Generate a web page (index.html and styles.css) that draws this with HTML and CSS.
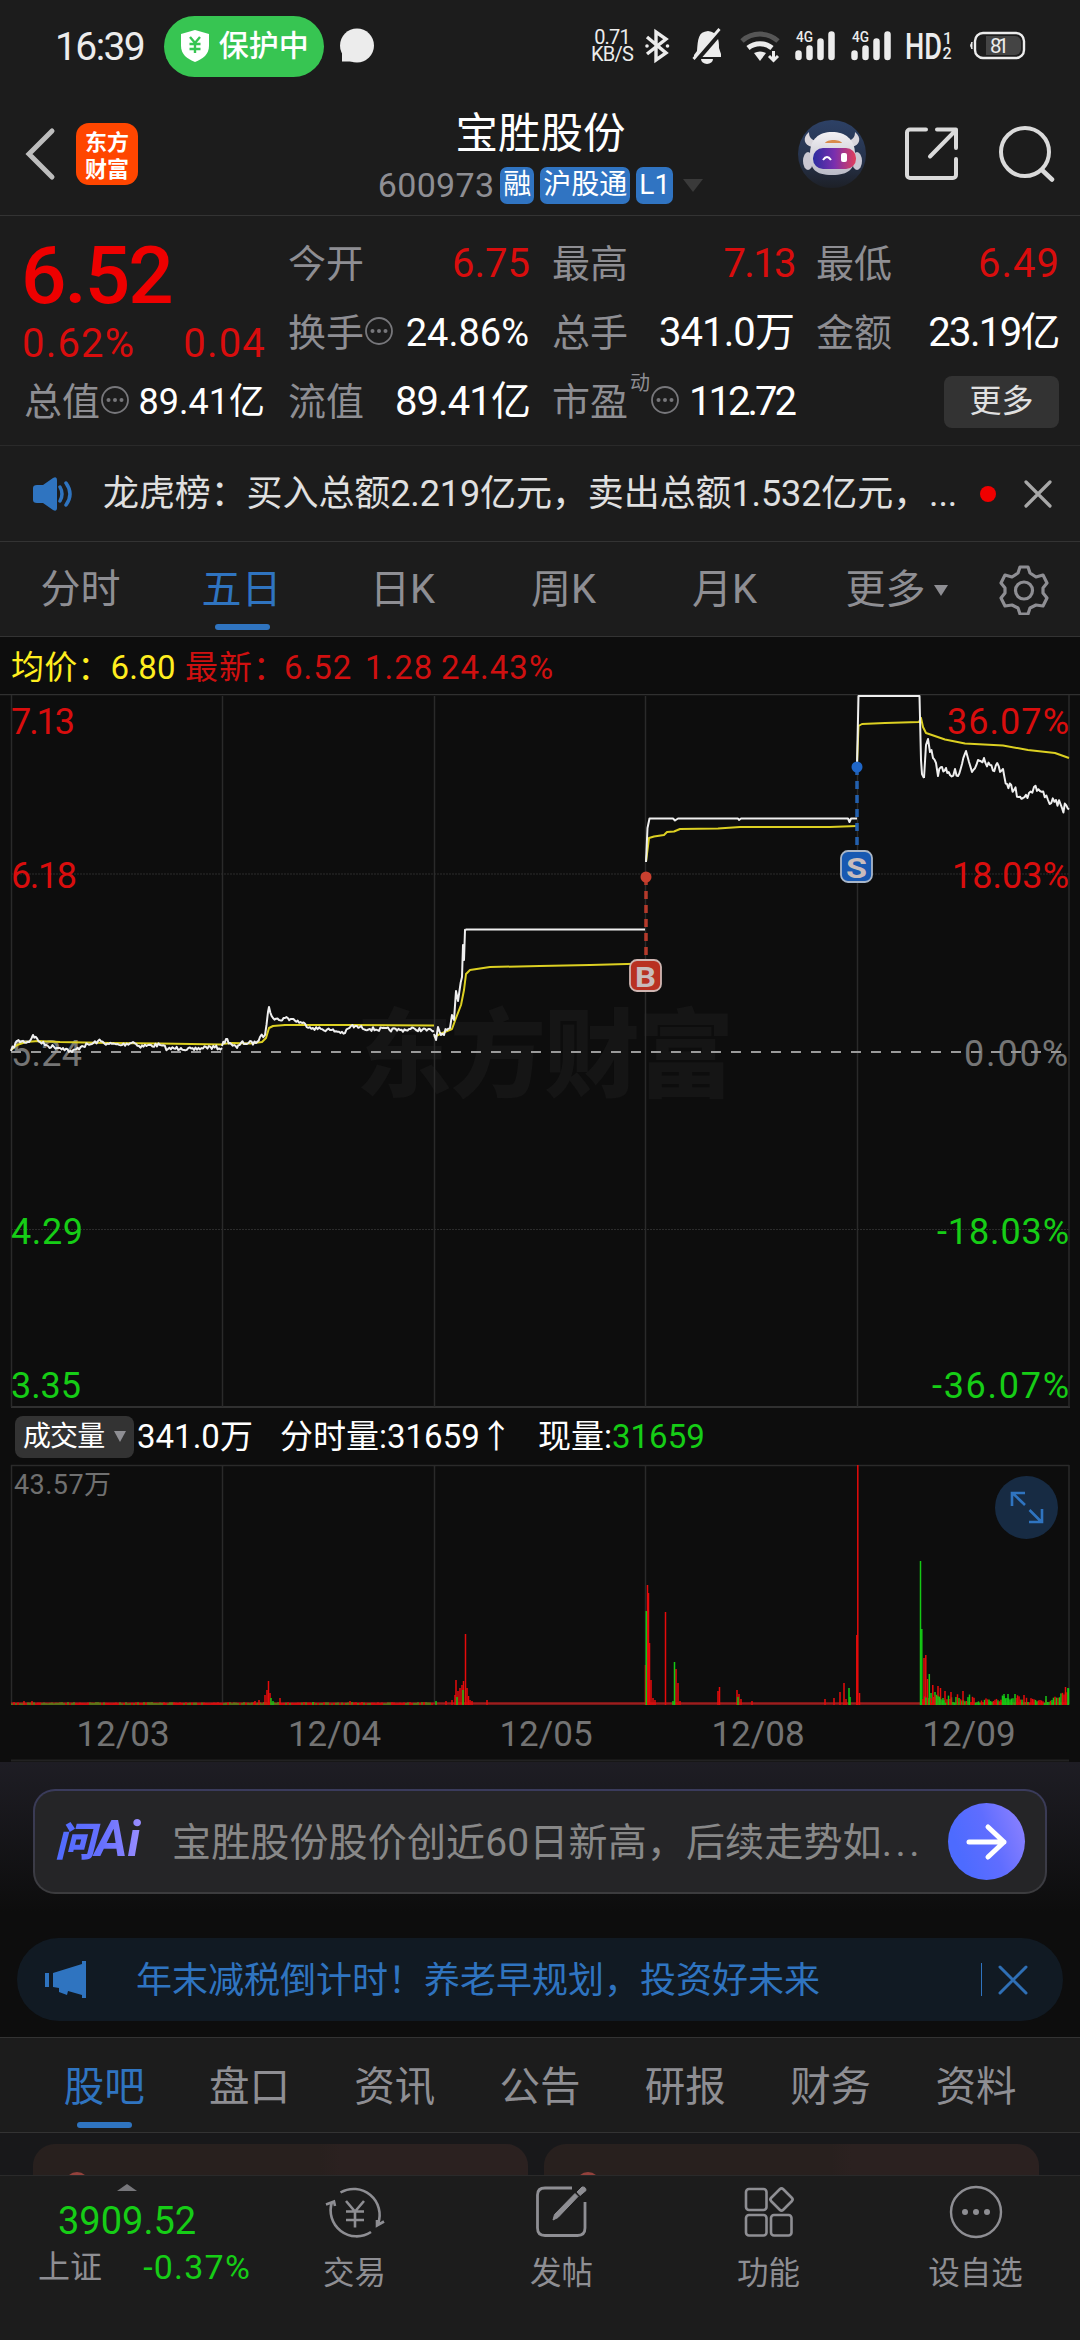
FILE: index.html
```html
<!DOCTYPE html>
<html lang="zh-CN">
<head>
<meta charset="utf-8">
<title>宝胜股份 600973</title>
<link rel="stylesheet" href="styles.css">
</head>
<body>
<div class="app">

  <div class="status">
    <span class="time">16:39</span>
    <span class="guard">
      <svg width="28" height="32" viewBox="0 0 28 32"><path d="M14 0 28 4V16C28 24 22 29 14 32 6 29 0 24 0 16V4Z" fill="#fff"/><path d="M9 7l5 6 5-6M8.500 14h11M8.500 19h11M14 13v10" fill="none" stroke="#37c552" stroke-width="2.400"/></svg>
      <span>保护中</span>
    </span>
    <svg class="bubble" width="34" height="36" viewBox="0 0 34 36"><circle cx="17" cy="17.500" r="17" fill="#ececec"/><path d="M2 22V33.500H13Z" fill="#ececec"/></svg>
    <span class="speed"><span>0.71</span><span>KB/S</span></span>
    <svg class="sys" width="440" height="40" viewBox="640 26 440 40">
      <g fill="none" stroke="#ececec" stroke-width="3.400"><path d="M647 37l19 16-10 7V32l10 7-19 15"/></g>
      <circle cx="647" cy="46" r="1.800" fill="#ececec"/><circle cx="667.500" cy="46" r="1.800" fill="#ececec"/>
      <path d="M697 51c1-12 1-19 11-20 10 1 11 9 11 17l2 6v3H694v-2z" fill="#ececec"/><path d="M701 59h12a6 5 0 0 1-12 0z" fill="#ececec"/><path d="M695 61 721 31" stroke="#1c1c1c" stroke-width="6"/><path d="M693.500 59 719.500 29" stroke="#ececec" stroke-width="2.800"/>
      <path d="M742 41a27 27 0 0 1 36 0" fill="none" stroke="#565656" stroke-width="5"/>
      <path d="M748 48a19 19 0 0 1 24 0" fill="none" stroke="#ececec" stroke-width="5"/>
      <path d="M754 53q6-3 12 0l-6 8z" fill="#ececec"/><path d="M773.500 51v8M769 56l4.500 4.500L778 56" fill="none" stroke="#ececec" stroke-width="3"/>
      <g stroke="#ececec" stroke-width="6.500" stroke-linecap="round"><path d="M798.500 53.500v3.500M809.500 48.500v8.500M820.500 41.500v15.500M831.500 34.500v22.500M854.500 53.500v3.500M865.500 48.500v8.500M876.500 41.500v15.500M887.500 34.500v22.500"/></g>
      <g fill="#ececec" font-weight="500"><text x="796" y="42" font-size="14" textLength="17" lengthAdjust="spacingAndGlyphs">4G</text><text x="852" y="42" font-size="14" textLength="17" lengthAdjust="spacingAndGlyphs">4G</text>
      <text x="905" y="59" font-size="37" textLength="37" lengthAdjust="spacingAndGlyphs">HD</text><text x="943" y="44" font-size="16">1</text><text x="942.500" y="59" font-size="16">2</text></g>
      <rect x="975" y="33" width="49" height="25" rx="8" fill="none" stroke="#ececec" stroke-width="2.400"/><path d="M986 36h29a6 6 0 0 1 6 6v7a6 6 0 0 1-6 6h-29z" fill="#444"/><path d="M972 42q-3 3.500 0 7z" fill="#ececec" stroke="#ececec"/>
      <text x="990" y="53" font-size="20.500" fill="#ececec" textLength="19">81</text>
    </svg>
  </div>

  <header class="head">
    <svg class="back" width="32" height="54" viewBox="0 0 32 54"><path d="M28 4 5 27 28 50" fill="none" stroke="#bdbdbd" stroke-width="5" stroke-linecap="round"/></svg>
    <div class="brand"><span>东方</span><span>财富</span></div>
    <div class="title">
      <h1>宝胜股份</h1>
      <div class="codes"><span class="code">600973</span><b>融</b><b>沪股通</b><b>L1</b><i></i></div>
    </div>
    <svg class="robot" width="68" height="68" viewBox="0 0 68 68">
      <defs><linearGradient id="rb" x1="0" y1="0" x2="0" y2="1"><stop offset="0" stop-color="#2d4166"/><stop offset=".6" stop-color="#26324a"/><stop offset="1" stop-color="#1d2027"/></linearGradient>
      <linearGradient id="rf"><stop offset="0" stop-color="#2b2ea0"/><stop offset=".5" stop-color="#7a2fae"/><stop offset="1" stop-color="#e23f5a"/></linearGradient>
      <linearGradient id="rw" x1="0" y1="0" x2="0" y2="1"><stop offset="0" stop-color="#f3f1f4"/><stop offset="1" stop-color="#b9bac6"/></linearGradient></defs>
      <circle cx="34" cy="34" r="34" fill="url(#rb)"/>
      <path d="M11 12c-7 6-5 13 3 15l5-6c-6-1-8-4-8-9zM57 12c7 6 5 13-3 15l-5-6c6-1 8-4 8-9z" fill="#d9d6dc"/>
      <ellipse cx="10" cy="41" rx="5" ry="9" fill="#c9c7d2"/><ellipse cx="59" cy="41" rx="5" ry="9" fill="#c9c7d2"/>
      <path d="M12 34c0-15 9-22 22-22s23 7 23 22c0 15-6 21-23 21s-22-6-22-21z" fill="url(#rw)"/>
      <rect x="15" y="28" width="43" height="21" rx="10" fill="url(#rf)"/>
      <path d="M27 23c2-4 15-4 17 0z" fill="#d98b4c"/><path d="M25 40q4-6 8 0" fill="none" stroke="#fff" stroke-width="2"/><rect x="43" y="33" width="6" height="9" rx="2" fill="#fff"/>
    </svg>
    <svg class="share" width="54" height="54" viewBox="0 0 54 54"><path d="M21 2.500H5a3 3 0 0 0-3 3V48a3 3 0 0 0 3 3H48a3 3 0 0 0 3-3V32M32 2.500H51V21M50 4 25 29.500" fill="none" stroke="#dadada" stroke-width="4" stroke-linecap="round" stroke-linejoin="round"/></svg>
    <svg class="search" width="56" height="56" viewBox="0 0 56 56"><circle cx="26" cy="26" r="24" fill="none" stroke="#dadada" stroke-width="4"/><path d="M43 44 53 53.500" stroke="#dadada" stroke-width="4.500" stroke-linecap="round"/></svg>
  </header>

  <section class="quote">
    <div class="price"><strong>6.52</strong><div class="chg"><span>0.62%</span><span>0.04</span></div></div>
    <div class="cell"><label>今开</label><span class="v red">6.75</span></div>
    <div class="cell"><label>最高</label><span class="v red t2">7.13</span></div>
    <div class="cell"><label>最低</label><span class="v red w1">6.49</span></div>
    <div class="cell"><label>换手</label><svg class="dots" width="28" height="30" viewBox="0 0 28 30"><use href="#info"/></svg><span class="v s38">24.86%</span></div>
    <div class="cell"><label>总手</label><span class="v t1">341.0万</span></div>
    <div class="cell"><label>金额</label><span class="v t2">23.19亿</span></div>
    <div class="cell"><label>总值</label><svg class="dots" width="28" height="30" viewBox="0 0 28 30"><g id="info" fill="#77777b"><circle cx="14" cy="15" r="13" fill="none" stroke="#77777b" stroke-width="1.800"/><circle cx="7.500" cy="15" r="2"/><circle cx="14" cy="15" r="2"/><circle cx="20.500" cy="15" r="2"/></g></svg><span class="v s36">89.41亿</span></div>
    <div class="cell"><label>流值</label><span class="v t1">89.41亿</span></div>
    <div class="cell"><label>市盈</label><sup>动</sup><svg class="dots" width="28" height="30" viewBox="0 0 28 30"><use href="#info"/></svg><span class="v t3">112.72</span></div>
    <div class="cell end"><span class="more">更多</span></div>
  </section>

  <section class="news">
    <svg width="42" height="36" viewBox="0 0 42 36"><path d="M1 12q0-3 4-3h6L21 2q4-2 4 2v28q0 4-4 2l-10-7H5q-4 0-4-3z" fill="#2f74c0"/><path d="M28 11q4 7 0 14M34 7q8 11 0 22" fill="none" stroke="#2f74c0" stroke-width="3.500" stroke-linecap="round"/></svg>
    <p>龙虎榜：买入总额2.219亿元，卖出总额1.532亿元，...</p>
    <i class="dot"></i>
    <svg width="28" height="28" viewBox="0 0 28 28"><path d="M2 2 26 26M26 2 2 26" stroke="#a8a8a8" stroke-width="3.200" stroke-linecap="round"/></svg>
  </section>

  <nav class="periods">
    <span>分时</span><span class="on">五日</span><span>日K</span><span>周K</span><span>月K</span><span class="drop">更多<i></i></span>
    <svg width="50" height="50" viewBox="0 0 50 50"><path d="M21 2h8l2 6 6 4 7-2 4 8-4 5v5l4 5-4 8-7-1-6 3-2 6h-8l-2-6-6-3-7 1-4-8 4-5v-5l-4-5 4-8 7 2 6-4z" fill="none" stroke="#8e8e93" stroke-width="3.200" stroke-linejoin="round"/><circle cx="25" cy="25.500" r="8.500" fill="none" stroke="#8e8e93" stroke-width="3.200"/></svg>
  </nav>

  <div class="avg"><span class="yel">均价：6.80</span><span>最新：</span><span>6.52</span><span>1.28</span><span>24.43%</span></div>

  <svg class="chart" width="1080" height="714" viewBox="0 694 1080 714">
    <text class="mark" x="356" y="1089" textLength="378">东方财富</text>
    <path d="M0 694.500H1080" stroke="#303030" stroke-width="1.500"/>
    <path d="M11 1407H1070" stroke="#303030" stroke-width="2"/>
    <path d="M11.500 695V1407M222.500 696V1407M434.500 696V1407M645.500 696V1407M857.500 696V1407M1069 695V1407" stroke="#2a2a2a" stroke-width="1.500"/>
    <path d="M11 874H1069M11 1229.500H1069" stroke="#2c2c2c" stroke-width="1" stroke-dasharray="2 1"/>
    <text x="11" y="1066" fill="#757575" textLength="71">5.24</text>
    <text x="1068" y="1066" fill="#757575" text-anchor="end" textLength="104">0.00%</text>
    <path d="M11 1052H1069" stroke="#9a9a9a" stroke-width="2" stroke-dasharray="10 10"/>
    <g fill="#d90d0d"><text x="11" y="734" textLength="64">7.13</text><text x="11" y="888" textLength="66">6.18</text>
    <text x="1069" y="734" text-anchor="end" textLength="122">36.07%</text><text x="1069" y="888" text-anchor="end" textLength="117">18.03%</text></g>
    <g fill="#16cd16"><text x="11" y="1244" textLength="72">4.29</text><text x="11" y="1398" textLength="70">3.35</text>
    <text x="1069" y="1244" text-anchor="end" textLength="132">-18.03%</text><text x="1069" y="1398" text-anchor="end" textLength="137">-36.07%</text></g>
    <g id="lines" fill="none" stroke-width="2" stroke-linejoin="round"></g>
    <g stroke="#b53a2b" fill="#c9402f"><path d="M646 877V955" stroke-width="3.500" stroke-dasharray="8 6"/><circle cx="646" cy="877" r="5.500" stroke="none"/></g>
    <rect x="630" y="960" width="31" height="31" rx="7" fill="#b93122" stroke="#cfb6b2" stroke-width="1.800"/><text class="flag" x="645.500" y="986.500" textLength="21" lengthAdjust="spacingAndGlyphs">B</text>
    <g stroke="#2360ae" fill="#1f66c8"><path d="M857 767V845" stroke-width="3.500" stroke-dasharray="8 6"/><circle cx="857" cy="767" r="5.500" stroke="none"/></g>
    <rect x="841" y="851" width="31" height="31" rx="7" fill="#1859b2" stroke="#a9b6c8" stroke-width="1.800"/><text class="flag" x="856.500" y="877.500" textLength="21" lengthAdjust="spacingAndGlyphs">S</text>
  </svg>

  <div class="volhead">
    <span class="pick">成交量<i></i></span><span class="n1">341.0万</span><span class="n2">分时量:31659↑</span><span class="n3">现量:<em>31659</em></span>
  </div>

  <svg class="volume" width="1080" height="298" viewBox="0 1464 1080 298">
    <path d="M11 1465.500H1069M11.500 1465V1704M222.500 1465V1704M434.500 1465V1704M645.500 1465V1704M1069 1465V1704" fill="none" stroke="#2a2a2a" stroke-width="1.500"/>
    <text x="14" y="1494" font-size="27" fill="#707070" textLength="97">43.57万</text>
    <path d="M11 1703.500H1069" stroke="#9c1d1d" stroke-width="2.500"/>
    <g id="bars"></g>
    <circle cx="1026.500" cy="1507.500" r="31.500" fill="#172b43"/>
    <path d="M1025 1505 1012.500 1493M1012 1506V1493H1025M1029.500 1510 1041.500 1522M1042 1509V1522H1029" fill="none" stroke="#2f74c0" stroke-width="2.600"/>
    <g class="dates" fill="#737373"><text x="123" y="1746">12/03</text><text x="334.500" y="1746">12/04</text><text x="546" y="1746">12/05</text><text x="758" y="1746">12/08</text><text x="969" y="1746">12/09</text></g>
    <path d="M11 1760.500H1069" stroke="#222" stroke-width="2"/>
  </svg>

  <section class="ask">
    <div class="askbox">
      <span class="ai">问<b>Ai</b></span>
      <p>宝胜股份股价创近60日新高，后续走势如<span>...</span></p>
      <span class="go"><svg width="42" height="38" viewBox="0 0 42 38"><path d="M3 19H38M22 4 38 19 22 34" fill="none" stroke="#fff" stroke-width="5" stroke-linecap="round" stroke-linejoin="round"/></svg></span>
    </div>
  </section>

  <section class="promo">
    <svg width="42" height="38" viewBox="0 0 42 38"><path d="M0 12h4v14H0zM8 12 37 3V0h4v37h-4v-3L23 30l-1 4-8-3v-4l-6-1z" fill="#2f74c0"/></svg>
    <p>年末减税倒计时！养老早规划，投资好未来</p>
    <i></i>
    <svg width="30" height="30" viewBox="0 0 30 30"><path d="M2 2 28 28M28 2 2 28" stroke="#2f6fb5" stroke-width="3" stroke-linecap="round"/></svg>
  </section>

  <nav class="tabs"><span class="on">股吧</span><span>盘口</span><span>资讯</span><span>公告</span><span>研报</span><span>财务</span><span>资料</span></nav>

  <section class="cards"><div><i></i></div><div><i></i></div></section>

  <footer class="bar">
    <div class="index">
      <i></i><strong>3909.52</strong>
      <div><span>上证</span><em>-0.37%</em></div>
    </div>
    <div class="act"><svg width="60" height="56" viewBox="0 0 60 56"><g fill="none" stroke="#8e8e93" stroke-width="2.600"><path d="M15.500 8.500A26 26 0 0 1 53 40M46 48A26 26 0 0 1 7 18M1 20.500 9 17.500 10 22M59 37.500 52 41.500V36"/><path d="M21 17 30 27.500 39 17M21 27.500H39M21 36H39M30 27V43.500"/></g></svg><span>交易</span></div>
    <div class="act"><svg width="60" height="56" viewBox="0 0 60 56"><path d="M40 4H13Q5.500 4 5.500 11V44Q5.500 51.500 13 51.500H45.500Q53 51.500 53 44V18" fill="none" stroke="#8e8e93" stroke-width="2.800"/><path d="M21 36 22.500 30.500 43 9.500 46 12.500 26 33.500ZM45 8 50 3Q54 2.500 54 6.500L48 11.500Z" fill="#8e8e93" stroke="#8e8e93"/></svg><span>发帖</span></div>
    <div class="act"><svg width="60" height="56" viewBox="0 0 60 56"><g fill="none" stroke="#8e8e93" stroke-width="2.600"><rect x="7" y="5" width="20.500" height="21" rx="3"/><rect x="7" y="31" width="20.500" height="20.500" rx="3"/><rect x="32" y="31" width="20.500" height="20.500" rx="3"/><rect x="34" y="7" width="17" height="17" rx="2.500" transform="rotate(45 42.500 15.500)"/></g></svg><span>功能</span></div>
    <div class="act"><svg width="60" height="56" viewBox="0 0 60 56"><circle cx="30" cy="28" r="25" fill="none" stroke="#8e8e93" stroke-width="2.400"/><g fill="#8e8e93"><circle cx="19" cy="28" r="3"/><circle cx="30" cy="28" r="3"/><circle cx="41" cy="28" r="3"/></g></svg><span>设自选</span></div>
  </footer>
</div>
<script src="chart.js"></script>
</body>
</html>
```

FILE: styles.css
```css
* { box-sizing: border-box; margin: 0; padding: 0; }
body { width: 1080px; height: 2340px; overflow: hidden; background: #0d0d0d; color: #fff; font-family: Roboto, "Noto Sans CJK SC", sans-serif; }
.app { display: flex; flex-direction: column; width: 1080px; height: 2340px; background: #0d0d0d; }
i, em { font-style: normal; }
svg { display: block; flex: none; }
p, span, label, strong, h1 { white-space: nowrap; }

/* system status bar */
.status { display: flex; align-items: center; height: 92px; padding-left: 55px; background: #1c1c1c; color: #ececec; }
.time { width: 109px; font-size: 39px; line-height: 40px; letter-spacing: -1.6px; padding-top: 2px; }
.guard { display: flex; align-items: center; gap: 10px; width: 161px; height: 61px; padding-left: 17px; border-radius: 31px; background: #37c552; color: #fff; font-size: 30px; line-height: 34px; font-weight: 500; }
.bubble { margin: 0 0 0 16px; }
.speed { display: flex; flex-direction: column; width: 48px; margin-left: 214px; text-align: center; font-size: 20px; line-height: 17px; letter-spacing: -.8px; }
.sys { margin-left: 4px; }

/* title bar */
.head { display: flex; align-items: center; height: 124px; padding: 0 25px 0 24px; background: #1c1c1c; border-bottom: 1px solid #333; }
.brand { display: flex; flex-direction: column; justify-content: center; align-items: center; width: 62px; height: 62px; margin-left: 20px; border-radius: 13px; background: #ff4600; font: 700 22px/27px "Noto Sans CJK SC", sans-serif; }
.title { flex: 1; display: flex; flex-direction: column; align-items: center; padding: 3px 0 0 145px; }
.title h1 { font-size: 42.500px; line-height: 56px; font-weight: 400; }
.codes { display: flex; align-items: center; gap: 6px; height: 38px; margin: 4px 0 0; }
.code { color: #8e8e93; font-size: 34px; line-height: 38px; letter-spacing: .3px; }
.codes b { height: 37px; padding: 0 3px; border-radius: 7px; background: #3074c2; font-size: 28px; line-height: 36px; font-weight: 400; }
.codes i { border: 10px solid transparent; border-top: 13px solid #3a3a3a; border-bottom: 0; margin-left: 4px; }
.robot { margin-right: 39px; }
.share { margin-right: 40px; }

/* quote grid */
.quote { display: grid; grid-template-columns: repeat(4, 240px); grid-template-rows: repeat(3, 69px); gap: 0 24px; height: 230px; padding: 13px 0 0 24px; background: #1c1c1c; border-bottom: 1px solid #2a2a2a; }
.price { grid-row: span 2; color: #e00; }
.price strong { display: block; margin-left: -3px; padding-top: 3px; font-size: 80px; line-height: 88px; font-weight: 500; letter-spacing: -2px; }
.chg { display: flex; justify-content: space-between; color: #d90d0d; font-size: 40px; line-height: 46px; letter-spacing: 1.200px; margin: 1px -2px 0 -2px; }
.cell { display: flex; align-items: center; font-size: 40px; line-height: 50px; }
.cell label { color: #8e8e93; font-size: 38px; }
.cell sup { align-self: flex-start; margin: 1px 0 0 2px; font-size: 20px; line-height: 30px; color: #8e8e93; }
.dots { margin-top: -4px; margin-left: 1px; }
.v { margin-left: auto; margin-right: -1px; }
.red { color: #d90d0d; margin-right: -2px; }
.t1 { letter-spacing: -.9px; margin-right: -2px; } .t2 { letter-spacing: -1.600px; margin-right: -3px; } .t3 { letter-spacing: -3px; margin-right: -2px; } .w1 { letter-spacing: 1px; margin-right: -4px; }
.s38 { font-size: 38px; } .s36 { font-size: 36px; }
.end { justify-content: flex-end; padding-right: 0; }
.more { width: 115px; height: 52px; margin-right: -3px; border-radius: 8px; background: #333; color: #e0e0e0; font-size: 32px; line-height: 51px; text-align: center; }

/* news strip */
.news { display: flex; align-items: center; height: 96px; padding: 0 28px 0 32px; background: #1c1c1c; border-bottom: 1px solid #333; color: #e0e0e0; }
.news p { flex: 1; margin-left: 29px; font-size: 36px; line-height: 50px; letter-spacing: -.1px; }
.dot { width: 16px; height: 16px; margin-right: 28px; border-radius: 50%; background: #f00000; }

/* period tabs */
.periods { display: grid; grid-template-columns: repeat(6, 161px) auto; align-items: center; height: 95px; background: #1c1c1c; border-bottom: 1px solid #333; color: #8e8e93; font-size: 40px; line-height: 96px; text-align: center; }
.periods svg { margin-left: 33px; }
.on { position: relative; color: #2f74c0; }
.on::after { content: ""; position: absolute; left: 50%; bottom: 8px; width: 55px; height: 6px; margin-left: -27px; border-radius: 3px; background: #2f74c0; }
.drop { position: relative; }
.drop i { position: absolute; left: 129px; top: 43px; border: 7px solid transparent; border-top: 11px solid #8e8e93; border-bottom: 0; }

/* readout above the price chart */
.avg { display: grid; grid-template-columns: 174px 99px 81px 76px 1fr; height: 57px; padding-left: 11px; color: #cf1010; font-size: 33px; line-height: 61px; }
.avg span { letter-spacing: 1px; }
.avg .yel { color: #ffee1f; letter-spacing: .2px; }
.chart { font-size: 36px; }
.mark { font: 900 96px "Noto Sans CJK SC", sans-serif; fill: #151515; }
.flag { font: 700 28px Roboto, sans-serif; fill: #c8bcbc; text-anchor: middle; }

/* volume */
.volhead { display: flex; align-items: center; height: 56px; padding: 1px 0 0 15px; font-size: 33px; line-height: 43px; }
.pick { display: flex; align-items: center; justify-content: space-between; width: 119px; height: 42px; padding: 0 8px; border-radius: 8px; background: #333; font-size: 28px; letter-spacing: -.9px; }
.pick i { border: 6.500px solid transparent; border-top: 11px solid #8e8e93; border-bottom: 0; }
.n1 { width: 143px; margin-left: 3px; }
.n2 { width: 258px; }
.n3 em { color: #16cd16; }
.dates { font-size: 35px; text-anchor: middle; }

/* assistant prompt */
.ask { height: 176px; padding: 27px 33px 0; background: linear-gradient(#1e1d24, #0d0d0d 85%); }
.askbox { display: flex; align-items: center; height: 105px; padding: 0 20px 0 20px; border: 2px solid transparent; border-radius: 22px; background: linear-gradient(#252527, #252527) padding-box, linear-gradient(#3a3b5c, #3c3c3e) border-box; }
.ai { width: 94px; padding-bottom: 2px; font: italic 900 40px/52px Roboto, "Noto Sans CJK SC", sans-serif; background: linear-gradient(90deg, #4f6bff, #6670ff 50%, #a493ff); -webkit-background-clip: text; background-clip: text; color: transparent; }
.ai b { font-size: 50px; font-weight: 700; }
.askbox p { flex: 1; margin-left: 23px; padding-top: 2px; color: #888; font-size: 39px; line-height: 50px; letter-spacing: .15px; }
.askbox p span { letter-spacing: 3.500px; }
.go { display: flex; align-items: center; justify-content: center; width: 77px; height: 77px; border-radius: 50%; background: linear-gradient(70deg, #4d6bff 20%, #5f6dff 55%, #9284ff); }

/* promo strip */
.promo { display: flex; align-items: center; height: 83px; margin: 0 17px 16px; padding: 0 35px 0 28px; border-radius: 42px; background: #111a23; color: #2f74c0; }
.promo p { flex: 1; margin-left: 49px; padding-top: 2px; font-size: 36px; line-height: 50px; }
.promo i { width: 1px; height: 33px; margin-right: 16px; background: #2f74c0; }

/* content tabs */
.tabs { display: grid; grid-template-columns: repeat(7, 145.300px); height: 96px; padding-left: 31.500px; background: #1c1c1c; border-top: 1px solid #333; border-bottom: 1px solid #333; color: #8e8e93; font-size: 40.500px; line-height: 98px; text-align: center; }
.cards { display: flex; gap: 16px; height: 42px; padding: 11px 33px 0; overflow: hidden; background: #18181a; }
.cards div { width: 495px; height: 90px; padding: 28px 0 0 32px; border-radius: 22px; background: linear-gradient(90deg, #28201e 58%, #2b2120 62%); }
.cards i { display: block; width: 24px; height: 24px; border-radius: 50%; background: #93413c; }

/* bottom bar */
.bar { display: grid; grid-template-columns: 251px repeat(4, 207px); flex: 1; background: #1c1c1c; border-top: 1px solid #2a2a2a; }
.index { padding: 8px 0 0 38px; color: #16cd16; }
.index i { display: block; width: 0; margin-left: 79px; border: 10px solid transparent; border-bottom: 7px solid #77777b; border-top: 0; }
.index strong { display: block; margin-left: 20px; font-size: 38px; line-height: 56px; font-weight: 400; letter-spacing: 0; padding-top: 2px; }
.index div { display: flex; justify-content: space-between; width: 213px; line-height: 36px; font-size: 34px; letter-spacing: 1.200px; }
.index span { color: #8e8e93; font-size: 32px; letter-spacing: 0; }
.act { display: flex; flex-direction: column; align-items: center; padding-top: 8px; color: #8e8e93; font-size: 31.500px; line-height: 40px; }
.act span { margin-top: 14px; }
```

FILE: chart.js
```js
// Small deterministic generator so that minute ticks are stable between loads.
let seed = 7;
const rnd = () => (seed = (seed * 16807) % 2147483647) / 2147483647;

const NS = 'http://www.w3.org/2000/svg';
const add = (parent, name, attrs) => {
  const el = document.createElementNS(NS, name);
  for (const k in attrs) el.setAttribute(k, attrs[k]);
  document.getElementById(parent).appendChild(el);
};

// Walks the key points and adds minute-level noise between them.
const walk = (pts, noise) => {
  let d = `M${pts[0][0]} ${pts[0][1]}`;
  for (let i = 1; i < pts.length; i++) {
    const [x0, y0] = pts[i - 1], [x1, y1] = pts[i];
    const n = noise ? Math.max(1, Math.round((x1 - x0) / 1.5)) : 1;
    for (let k = 1; k <= n; k++) {
      const j = k < n ? (rnd() - .5) * 2 * noise : 0;
      d += `L${(x0 + (x1 - x0) * k / n).toFixed(1)} ${(y0 + (y1 - y0) * k / n + j).toFixed(1)}`;
    }
  }
  return d;
};

const average = [
  [[11, 1050], [17, 1045], [26, 1042], [38, 1041], [60, 1042], [110, 1043], [160, 1043.500], [222, 1044.500]],
  [[222, 1044], [232, 1043], [250, 1043.500], [262, 1042], [266, 1038], [269, 1028], [273, 1026], [285, 1025], [350, 1025], [434, 1025.500]],
  [[434, 1037], [440, 1034], [452, 1029], [456, 1018], [461, 1005], [464, 990], [466, 974], [470, 970], [490, 967], [540, 966], [590, 965], [645, 963.500]],
  [[646, 862], [649, 838], [654, 836.500], [664, 835], [667, 832], [674, 831.500], [680, 829], [718, 828.500], [740, 827], [830, 827], [857, 826]],
  [[857, 765], [858.500, 726], [862, 724], [885, 723], [919, 722], [921, 718], [923, 727], [926, 733], [945, 739.500], [965, 743.500], [1003, 745.500], [1028, 750], [1055, 753], [1069, 758]]
];
const price = [
  [[11, 1051], [17, 1041], [29, 1042], [33, 1035], [40, 1042], [48, 1046], [63, 1048], [72, 1052], [82, 1046], [92, 1044], [98, 1041], [109, 1044], [122, 1045], [133, 1042], [139, 1046], [160, 1045], [168, 1049], [181, 1048], [194, 1050], [206, 1047], [222, 1048]],
  [[222, 1046], [226, 1039], [230, 1043], [237, 1048], [241, 1043], [256, 1043], [260, 1037], [265, 1035], [268, 1012], [269, 1007], [273, 1018], [279, 1020], [285, 1018], [292, 1019], [302, 1023], [313, 1028], [330, 1030], [345, 1033], [351, 1026], [370, 1029], [400, 1030], [415, 1029], [434, 1031]],
  [[434, 1034], [436, 1040], [438, 1027], [441, 1035], [447, 1030], [450, 1028], [452, 1015], [454, 1020], [456, 991], [458, 1001], [462, 977], [463, 945], [464, 960], [465, 930], [466, 929.500]],
  [[466, 929.500], [645, 929.500]],
  [[646, 862], [647.500, 828], [649.500, 818.500], [673, 818.500], [675, 820.500], [678, 818.500], [738, 818.500], [739, 820], [741, 818.500], [848, 818.500], [849.500, 822], [851, 818.500], [857, 818.500]],
  [[857, 765], [858.500, 696], [919.500, 696], [921, 760], [922, 774], [924, 778]],
  [[924, 778], [926, 745], [928, 739], [930, 752], [933, 758], [936, 763], [938, 776], [942, 767], [946, 768], [950, 775], [955, 769], [958, 776], [962, 764], [966, 751], [969, 762], [972, 772], [978, 760], [984, 758], [990, 765], [1003, 769], [1007, 784], [1014, 790], [1023, 798], [1029, 793], [1034, 787], [1040, 791], [1048, 800], [1056, 800], [1062, 808], [1069, 809.500]]
];
const noise = [2, 2, 2.500, 0, 0, 0, 5];

average.forEach(a => add('lines', 'path', { d: walk(a, 0), stroke: '#dcd022' }));
price.forEach((p, i) => add('lines', 'path', { d: walk(p, noise[i]), stroke: '#efefef' }));

// Volume bars: x, height, colour.
const R = '#e60b0b', G = '#14c814', BASE = 1705;
const bar = (x, h, c) => add('bars', 'rect', { x: x - .75, y: BASE - h, width: 1.500, height: h, fill: c });

for (let x = 12; x < 434; x += 2) bar(x, 1.500 + rnd() * 1.500, rnd() > .55 ? '#4f8f14' : R);
[[24, 4], [32, 4], [255, 4], [259, 5], [265, 10], [267, 15], [268.500, 24], [270, 12], [280, 7], [350, 4],
 [446, 4], [452, 5], [455, 10], [456, 25], [458, 14], [460, 17], [462, 20], [463.500, 24], [465.500, 71], [467, 17], [468.500, 9], [470, 5], [472, 4], [487, 5],
 [645.500, 40], [647.500, 120], [648.500, 112], [649.500, 62], [651, 25], [653, 7], [655, 5], [665.500, 93], [676, 36], [678, 22], [680, 4], [718, 14], [719.500, 18], [737, 15], [739, 11], [741, 6], [752, 4],
 [825, 6], [834, 7], [840, 13], [844, 22], [846, 6], [856.800, 70], [857.800, 240], [859.500, 12]
].forEach(([x, h]) => bar(x, h, R));
[[271, 7], [273, 4], [313, 3], [436, 4], [457, 8], [463, 15], [646.300, 94], [674.500, 43], [673, 4], [738, 8], [849, 17], [850, 8],
 [920.500, 144], [921.800, 76]].forEach(([x, h]) => bar(x, h, G));
[[924, 47, R], [925.800, 50, R], [927.500, 26, R], [929.300, 31, G], [931, 12, G], [932.800, 20, R], [935, 13, G], [938, 19, R], [940.500, 17, R], [943, 7, G], [945, 14, R]].forEach(b => bar(...b));
for (let x = 923; x < 1069; x += 1.500) {
  const lift = x > 1052 ? (x - 1052) * .7 : 0;
  bar(x, 2 + rnd() * (x < 975 || (x > 1002 && x < 1028) ? 9 : 5) + lift, rnd() > .5 ? R : G);
}
[[963, 14, R], [951, 13, R], [1004, 11, G], [1008, 11, G], [1015, 11, G], [1024, 10, R], [1046, 9, G], [1065.500, 18, R], [1068, 17, G]].forEach(b => bar(...b));
```
